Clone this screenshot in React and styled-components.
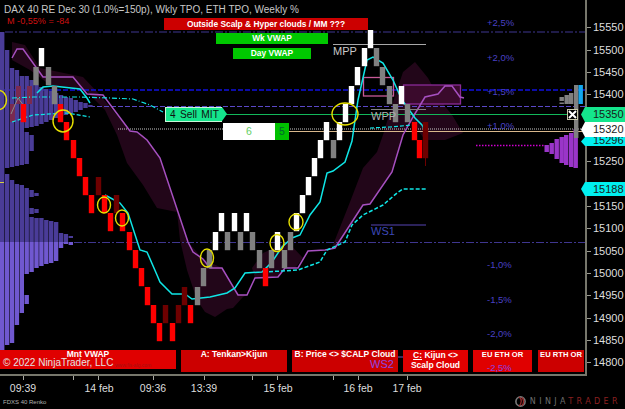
import styled, { createGlobalStyle } from "styled-components";

const GlobalStyle = createGlobalStyle`
  html, body { margin: 0; padding: 0; background: #000; }
  body { font-family: "Liberation Sans", Arial, sans-serif; overflow: hidden; }
`;

const W = "#ffffff", G = "#808080", R = "#ff0000", D = "#6e0000";

// renko bricks: left, top, colour
const bricks = [
  [39, 48, W], [33.5, 67, G], [46, 67, G], [52, 86, G], [21, 104, R], [58, 104, R], [64, 122, R],
  [71, 140, R], [77, 158, R], [83, 177, R], [89, 195, R], [96, 177, D], [102, 195, R], [108, 213, R],
  [114, 195, D], [120, 213, R], [127, 232, R], [133, 250, R], [139, 268, R], [145, 287, R], [151, 305, R],
  [157, 323, R], [163, 305, D], [170, 323, R], [176, 305, D], [182, 287, D], [188, 305, R], [195, 287, G],
  [201, 268, G], [207, 250, G], [213, 232, W], [219, 213, W], [225, 232, G], [232, 213, W], [238, 232, G],
  [244, 213, W], [250, 232, G], [257, 250, G], [263, 268, R], [269, 250, G], [275, 232, W], [282, 250, G],
  [288, 232, G], [294, 213, W], [300, 195, W], [306, 177, W], [312, 158, W], [318, 140, W], [324, 122, W],
  [331, 140, G], [337, 122, W], [343, 104, W], [349, 86, W], [355, 67, W], [362, 48, W], [368, 30, W],
  [374, 48, G], [380, 67, G], [387, 86, G], [393, 104, G], [399, 86, W], [405, 104, G], [412, 122, R],
  [417, 140, R], [423, 122, D], [423, 140, D],
];

// left volume profile: one strip per column, each with its [top, bottom] runs
const profile = [
  [[32, 352]],
  [[50, 168], [174, 345]],
  [[68, 167], [180, 343]],
  [[70, 166], [184, 325]],
  [[76, 165], [185, 313]],
  [[76, 128], [132, 164], [188, 274], [295, 304]],
  [[80, 127], [135, 151], [190, 197], [208, 214], [217, 272]],
  [[85, 126], [193, 196], [209, 213], [218, 268]],
  [[87, 124], [218, 266]],
  [[89, 122], [220, 264]],
  [[91, 120], [221, 263]],
  [[93, 118], [222, 261]],
  [[95, 116], [233, 248]],
  [[97, 115], [234, 244]],
  [[98, 113], [236, 238], [242, 245]],
  [[100, 112]],
  [[102, 110]],
  [[103, 108]],
  [[105, 107]],
];

const rightProfile = [
  [544.5, 145, 152, "#9a35c8"], [549.5, 143, 154, "#9a35c8"], [554.5, 139, 159, "#9a35c8"],
  [559.5, 137, 163, "#9a35c8"], [564, 135, 165, "#9a35c8"], [569, 133, 167, "#9a35c8"], [573.5, 129, 168, "#9a35c8"],
  [559.5, 97, 101, G], [559.5, 102.5, 104, G], [564.5, 95, 104, G], [569, 93, 104, G],
  [574, 85, 138, G], [578.5, 85, 104, "#12a8f0"],
];

const purple = "12,58 17,49 23,49 43,77 73,77 87,94 103,95 130,131 137,132 147,140 160,158 188,242 193,252 203,259 210,268 222,268 238,295 247,295 255,278 278,277 285,268 298,268 308,251 325,250 335,248 363,205 370,204 392,172 403,135 413,117 425,97 438,94 445,86 452,86 460,97 464,98";
const tenkan = "105,195 120,203 128,213 140,250 147,252 157,275 160,282 172,294 185,294 192,299 210,297 227,293 235,288 245,273 262,272 272,262 282,247 292,238 300,235 310,215 320,202 327,173 333,171 345,162 352,141 358,100 367,60 373,57 383,63 393,80 402,100 415,118 422,125 427,136";
const topTenkan = "37,93 43,87 53,86 80,89 87,98 90,103";
const kijun = "263,272 282,271 298,270 320,262 327,250 345,242 352,225 363,215 383,205 397,193 403,189 427,189";
const dashUpper = "12,98 33,97 80,97 110,98 133,99 150,105 163,112";
const dashLower = "12,122 33,115 67,113 90,117";
const dashRight = "370,128 390,127 412,125";
const cloudLeft = "12,42 25,45 40,68 83,77 100,95 130,131 143,135 160,158 188,242 203,259 222,268 238,295 247,295 243,297 233,308 227,309 215,317 205,312 197,300 187,270 180,240 177,212 157,208 143,185 127,163 117,135 105,110 85,90 50,85 30,70 12,60";
const cloudMid = "252,268 263,253 288,242 303,258 295,268 285,268 278,277 255,278";
const cloudRight = "333,245 350,202 363,168 377,152 383,135 392,105 403,72 415,62 428,78 440,100 452,115 463,133 445,140 425,140 412,122 403,135 392,172 370,204 363,205 335,248";

const rings = [
  [-1, 100, 7.5, 9.5], [63, 121, 10, 11], [104, 205, 6.5, 8], [122, 218, 6.5, 8], [207, 258, 6.5, 9],
  [277, 243, 7, 8.5], [296, 222, 7, 8], [345, 114, 13, 11],
];

const percents = [
  ["+2,5%", 23, "#4a40c4"], ["+2,0%", 58, "#4a40c4"], ["+1,5%", 92, "#4a40c4"], ["+1,0%", 126, "#4a40c4"],
  ["-1,0%", 265, "#4a40c4"], ["-1,5%", 300, "#4a40c4"], ["-2,0%", 334, "#4a40c4"], ["-2,5%", 368, "#8a40e0"],
];

// the tags cover the labels that have no text here
const prices = [15550, 15500, 15450, 15400, "", "", 15250, "", 15150, 15100, 15050, 15000, 14950, 14900, 14850, 14800];
const ticks = [23, 73, 98, 153, 204, 252, 277, 333, 358, 407];
const dates = [["09:39", 23], ["14 feb", 99], ["09:36", 153], ["13:39", 204], ["15 feb", 278], ["16 feb", 358], ["17 feb", 407]];

const Page = styled.div`
  width: 625px;
  height: 409px;
  display: flex;
  flex-direction: column;
  background: #000;
  color: #ddd;
  overflow: hidden;
`;

const Main = styled.div`
  display: flex;
  height: 374px;
  position: relative;
`;

const Chart = styled.div`
  position: relative;
  width: 585px;
  display: flex;
  flex-direction: column;
  justify-content: space-between;
  padding: 4px 0 2px;
  box-sizing: border-box;
`;

const Plot = styled.svg`
  position: absolute;
  inset: 0;
`;

const Top = styled.div`
  position: relative;
  display: flex;
  flex-direction: column;
  align-items: flex-start;
`;

const Title = styled.div`
  margin-left: 4px;
  font-size: 10px;
  line-height: 12px;
  color: #c8c8c8;
  white-space: nowrap;
`;

const Loss = styled.div`
  margin: -1px 0 -9px 7px;
  font-size: 9.1px;
  line-height: 12px;
  color: #d01010;
`;

const Banner = styled.div`
  margin: ${(p) => p.$gap}px 0 0 ${(p) => p.$left}px;
  width: ${(p) => p.$width}px;
  height: ${(p) => p.$height}px;
  line-height: ${(p) => p.$height}px;
  background: ${(p) => p.$bg};
  color: #fff;
  font-size: 8.4px;
  font-weight: 700;
  text-align: center;
  white-space: nowrap;
`;

const ButtonRow = styled.div`
  position: relative;
  display: flex;
  gap: 5px;
  align-items: flex-start;
  height: 22px;
`;

const RowButton = styled.div`
  width: ${(p) => p.$width}px;
  height: ${(p) => p.$height || 22}px;
  margin-left: ${(p) => p.$left || 0}px;
  box-sizing: border-box;
  background: ${(p) => p.$bg};
  color: #fff;
  font-size: ${(p) => p.$size || 8.5}px;
  font-weight: 700;
  line-height: ${(p) => p.$line || 10}px;
  text-align: center;
  white-space: nowrap;
  position: relative;
  u { text-decoration: underline; }
`;

const Copyright = styled.span`
  position: absolute;
  left: 3px;
  top: 8px;
  font-size: 10px;
  line-height: 10px;
  font-weight: 400;
  color: #e4e4e4;
`;

const Faint = styled.span`
  position: absolute;
  left: 115px;
  top: 12px;
  font-size: 5px;
  line-height: 6px;
  font-weight: 400;
  color: #a81010;
`;

const Level = styled.span`
  position: absolute;
  z-index: 2;
  left: ${(p) => p.$x}px;
  top: ${(p) => p.$y}px;
  font-size: ${(p) => p.$size || 9.5}px;
  line-height: 10px;
  color: ${(p) => p.$color};
  white-space: nowrap;
`;

const SellTag = styled.div`
  position: absolute;
  left: 165px;
  top: 107px;
  width: 52px;
  height: 13px;
  padding-left: 4px;
  background: #14e58c;
  border: 1px solid #c8f8d8;
  border-right: none;
  color: #111;
  font-size: 10.2px;
  line-height: 13px;
  word-spacing: 1.5px;
  white-space: nowrap;
  &::after {
    content: "";
    position: absolute;
    left: 100%;
    top: -1px;
    border-left: 5px solid #14e58c;
    border-top: 7.5px solid transparent;
    border-bottom: 7.5px solid transparent;
  }
`;

const Quantity = styled.div`
  position: absolute;
  left: 223px;
  top: 123px;
  display: flex;
  height: 17px;
  font-size: 10.5px;
  line-height: 17px;
  text-align: center;
`;

const QtyValue = styled.span`
  width: 52px;
  background: #fff;
  color: #66d066;
`;

const QtyStep = styled.span`
  width: 14px;
  background: #00c000;
  color: #063;
`;

const PriceAxis = styled.div`
  width: 40px;
  padding-top: 16.5px;
  box-sizing: border-box;
  border-left: 2px solid #77776c;
  display: flex;
  flex-direction: column;
`;

const PriceLabel = styled.div`
  height: 22.87px;
  display: flex;
  align-items: center;
  font-size: 11px;
  line-height: 13px;
  color: #dedede;
  &::before {
    content: "";
    width: 4px;
    height: 1px;
    margin-right: 2px;
    background: #9a9a90;
  }
`;

const PriceTag = styled.div`
  position: absolute;
  left: 581px;
  top: ${(p) => p.$y}px;
  width: 44px;
  height: ${(p) => p.$h}px;
  padding-left: 12px;
  box-sizing: border-box;
  background: ${(p) => p.$bg};
  color: #1a1a1a;
  font-size: 11px;
  line-height: ${(p) => p.$line || p.$h}px;
  clip-path: polygon(4px 0, 100% 0, 100% 100%, 4px 100%, 0 50%);
`;

const CloseBox = styled.div`
  position: absolute;
  left: 567px;
  top: 109px;
  width: 11px;
  height: 11px;
  border: 1px solid #c8c8a8;
  box-sizing: border-box;
  background: #000;
  line-height: 0;
`;

const TimeAxis = styled.div`
  position: relative;
  height: 21px;
  width: 587px;
  border-top: 2px solid #77776c;
  box-sizing: border-box;
`;

const Tick = styled.i`
  position: absolute;
  left: ${(p) => p.$x}px;
  top: 0;
  width: 1px;
  height: 4px;
  background: #a8a8a0;
`;

const TimeLabel = styled.span`
  position: absolute;
  left: ${(p) => p.$x}px;
  top: 6px;
  transform: translateX(-50%);
  font-size: 10.5px;
  line-height: 13px;
  color: #dedede;
  white-space: nowrap;
`;

const Footer = styled.div`
  flex: 1;
  display: flex;
  align-items: center;
  justify-content: space-between;
  padding: 0 4px 1px 3px;
`;

const Instrument = styled.span`
  font-size: 6px;
  color: #b0b0b0;
`;

const Logo = styled.div`
  display: flex;
  align-items: center;
  gap: 3px;
  font-family: "DejaVu Sans", sans-serif;
  font-size: 8px;
  letter-spacing: 3.4px;
  line-height: 10px;
  color: #6e6e6e;
  white-space: nowrap;
  b { font-weight: 400; color: #8c2020; }
`;

function App() {
  return (
    <Page>
      <GlobalStyle />
      <Main>
        <Chart>
          <Plot width="585" height="374" viewBox="0 0 585 374">
            <polygon points={cloudLeft} fill="#220619" />
            <polygon points={cloudMid} fill="#220619" />
            <polygon points={cloudRight} fill="#220619" />

            <line x1="5" y1="32" x2="585" y2="32" stroke="#3f3690" strokeWidth="1" strokeDasharray="8 2 2 2" />
            <line x1="60" y1="242.5" x2="585" y2="242.5" stroke="#3f3690" strokeWidth="1" strokeDasharray="8 2 2 2" />
            <line x1="0" y1="90" x2="585" y2="90" stroke="#1010e0" strokeWidth="1.3" strokeDasharray="5 2" />
            <line x1="90" y1="106.5" x2="585" y2="106.5" stroke="#5a48c8" strokeWidth="1" strokeDasharray="5 2" />
            <line x1="118" y1="129" x2="585" y2="129" stroke="#c8c8c8" strokeWidth="1" strokeDasharray="1 1" />
            <line x1="222" y1="114.5" x2="570" y2="114.5" stroke="#12b85a" strokeWidth="1" />
            <line x1="289" y1="131.5" x2="585" y2="131.5" stroke="#d8b88c" strokeWidth="1.2" />
            <line x1="476" y1="145.5" x2="545" y2="145.5" stroke="#d000d0" strokeWidth="1.4" strokeDasharray="1.5 1.5" />

            {profile.map((runs, i) =>
              runs.map(([top, bottom]) => {
                const x = i * 4.9;
                const split = Math.max(top, Math.min(bottom, 242));
                return (
                  <g key={`${i}-${top}`}>
                    {split > top && <rect x={x} y={top} width="4.4" height={split - top} fill="#4a3c98" />}
                    {bottom > split && <rect x={x} y={split} width="4.4" height={bottom - split} fill="#7058d0" />}
                  </g>
                );
              })
            )}
            <rect x="0" y="182" width="4" height="1" fill="#d8d040" />
            {rightProfile.map(([x, top, bottom, fill]) => (
              <rect key={`${x}-${top}`} x={x} y={top} width="4.4" height={bottom - top} fill={fill} />
            ))}

            <rect x="10" y="104" width="5" height="18" fill="#7a2a50" />
            <rect x="16" y="86" width="5" height="18" fill="#7a2a50" />
            <rect x="27" y="86" width="5" height="18" fill="#7a2a50" />
            <polyline points="11,114 18,98 24,106" fill="none" stroke="#8c8c8c" strokeWidth="1" />

            <rect x="363.5" y="77.5" width="30" height="18.5" fill="none" stroke="#c85a98" strokeWidth="1.3" />
            <rect x="403.5" y="85" width="57" height="19" fill="#3a0a2c" stroke="#8a2a98" strokeWidth="1.3" />

            <polyline points={purple} fill="none" stroke="#a650c0" strokeWidth="1.5" />
            <polyline points={tenkan} fill="none" stroke="#0fe6e6" strokeWidth="1.5" />
            <polyline points={topTenkan} fill="none" stroke="#0fe6e6" strokeWidth="1.5" />
            <polyline points={kijun} fill="none" stroke="#0fe6e6" strokeWidth="1.5" strokeDasharray="4 2" />
            <polyline points={dashUpper} fill="none" stroke="#0fe6e6" strokeWidth="1.2" strokeDasharray="5 2 1 2" />
            <polyline points={dashLower} fill="none" stroke="#0fe6e6" strokeWidth="1.2" strokeDasharray="4 2" />
            <polyline points={dashRight} fill="none" stroke="#0fe6e6" strokeWidth="1.2" strokeDasharray="4 2" />

            <line x1="333" y1="44.5" x2="426" y2="44.5" stroke="#a8a8a8" strokeWidth="1" />
            <line x1="371" y1="109.5" x2="426" y2="109.5" stroke="#808080" strokeWidth="1" />
            <line x1="371" y1="225" x2="426" y2="225" stroke="#3a2e78" strokeWidth="1.3" />
            <line x1="370" y1="357" x2="426" y2="357" stroke="#6a5ac0" strokeWidth="1" />

            <line x1="425.5" y1="158" x2="425.5" y2="166" stroke="#6e0000" strokeWidth="1" />
            {bricks.map(([x, y, fill]) => (
              <rect key={`${x}-${y}`} x={x - 0.2} y={y} width="5.4" height="18.2" fill={fill} />
            ))}

            {rings.map(([cx, cy, rx, ry]) => (
              <ellipse key={cx} cx={cx} cy={cy} rx={rx} ry={ry} fill="none" stroke="#e6e000" strokeWidth="1.4" />
            ))}
          </Plot>

          <Top>
            <Title>DAX 40 RE Dec 30 (1.0%=150p), Wkly TPO, ETH TPO, Weekly %</Title>
            <Loss>M -0,55% = -84</Loss>
            <Banner $gap={0} $left={164} $width={204} $height={12} $bg="#cc0000">
              Outside Scalp &amp; Hyper clouds / MM ???
            </Banner>
            <Banner $gap={3} $left={216} $width={112} $height={11} $bg="#00c800">Wk VWAP</Banner>
            <Banner $gap={4} $left={233} $width={78} $height={11} $bg="#00c800">Day VWAP</Banner>
          </Top>

          {percents.map(([label, y, color]) => (
            <Level key={label} $x={487} $y={y - 5} $color={color}>{label}</Level>
          ))}
          <Level $x={333} $y={46} $size={11} $color="#c8c8c8">MPP</Level>
          <Level $x={371} $y={111} $size={11} $color="#b0b0b0">WPP</Level>
          <Level $x={371} $y={226} $size={11} $color="#3c48b8">WS1</Level>
          <Level $x={370} $y={359} $size={11} $color="#8a48e0">WS2</Level>

          <SellTag>4 Sell MIT</SellTag>
          <Quantity>
            <QtyValue>6</QtyValue>
            <QtyStep>5</QtyStep>
          </Quantity>

          <ButtonRow>
            <RowButton $width={176} $height={19} $line={8} $bg="#e00000">
              Mnt VWAP
              <Copyright>© 2022 NinjaTrader, LLC</Copyright>
              <Faint>www.fis-alg.com</Faint>
            </RowButton>
            <RowButton $width={106} $line={8} $bg="#cc0000">A: Tenkan&gt;Kijun</RowButton>
            <RowButton $width={106} $line={8} $bg="#cc0000">B: Price &lt;&gt; $CALP Cloud</RowButton>
            <RowButton $width={65} $bg="#e00000"><u>C:</u> Kijun &lt;&gt;<br />Scalp Cloud</RowButton>
            <RowButton $width={59} $size={7.6} $bg="#e00000">EU ETH OR</RowButton>
            <RowButton $width={46} $size={7.6} $left={1} $bg="#cc0000">EU RTH OR</RowButton>
          </ButtonRow>
        </Chart>

        <PriceAxis>
          {prices.map((price, i) => (
            <PriceLabel key={i}>{price}</PriceLabel>
          ))}
        </PriceAxis>

        <PriceTag $y={107} $h={15} $bg="#14e58c">15350</PriceTag>
        <PriceTag $y={137} $h={9} $line={7} $bg="#00f0f0">15296</PriceTag>
        <PriceTag $y={122} $h={15} $bg="#ffffff">15320</PriceTag>
        <PriceTag $y={182} $h={14} $bg="#00f0f0">15188</PriceTag>
        <CloseBox>
          <svg width="9" height="9" viewBox="0 0 9 9">
            <path d="M1 1 L8 8 M8 1 L1 8" stroke="#fff" strokeWidth="2" />
          </svg>
        </CloseBox>
      </Main>

      <TimeAxis>
        {ticks.map((x) => (
          <Tick key={x} $x={x} />
        ))}
        {dates.map(([label, x]) => (
          <TimeLabel key={label} $x={x}>{label}</TimeLabel>
        ))}
      </TimeAxis>

      <Footer>
        <Instrument>FDXS 40 Renko</Instrument>
        <Logo>
          <svg width="13" height="11" viewBox="0 0 13 11">
            <circle cx="6.5" cy="5.5" r="4.6" fill="none" stroke="#7a7a7a" strokeWidth="1.6" />
            <path d="M5 1 C8 3 8 7 5 10 M8 1.5 C10 4 10 7 8 9.5" fill="none" stroke="#9a2a2a" strokeWidth="1.3" />
          </svg>
          <span>NINJA<b>TRADER</b></span>
        </Logo>
      </Footer>
    </Page>
  );
}

export default App;
